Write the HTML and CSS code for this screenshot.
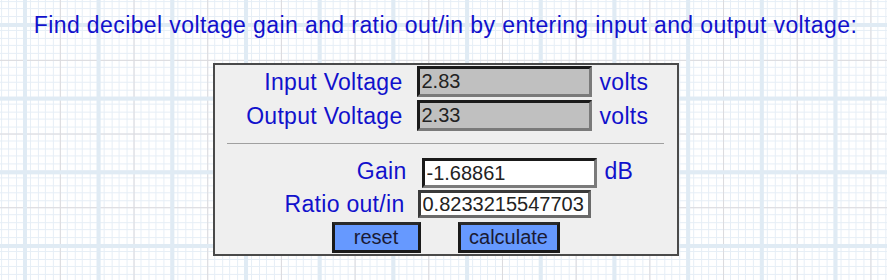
FILE: index.html
```html
<!DOCTYPE html>
<html lang="en">
<head>
  <meta charset="UTF-8">
  <title>Decibel Voltage Gain Calculator</title>
  <meta name="viewport" content="width=device-width, initial-scale=1.0">
  <link rel="stylesheet" href="styles.css">
</head>
<body>
  <h1 class="title">Find decibel voltage gain and ratio out/in by entering input and output voltage:</h1>

  <form class="panel" onsubmit="return false">
    <div class="rows volts">
      <label class="label" for="vin">Input Voltage</label>
      <input class="field given" id="vin" type="text" value="2.83">
      <span class="unit">volts</span>

      <label class="label" for="vout">Output Voltage</label>
      <input class="field given" id="vout" type="text" value="2.33">
      <span class="unit">volts</span>
    </div>

    <hr class="rule">

    <div class="rows results">
      <label class="label gain-label" for="gain">Gain</label>
      <input class="field result gain" id="gain" type="text" value="-1.68861">
      <span class="unit">dB</span>

      <label class="label ratio-label" for="ratio">Ratio out/in</label>
      <input class="field result ratio" id="ratio" type="text" value="0.8233215547703">
      <span></span>
    </div>

    <div class="actions">
      <button class="btn reset" type="reset">reset</button>
      <button class="btn calc" type="button">calculate</button>
    </div>
  </form>
</body>
</html>
```

FILE: styles.css
```css
:root {
  --ink: #1111cc;
  --panel: #efefef;
  --edge: #4a4a4a;
  --dark: #1a1a1a;
  --shade: #7a7a7a;
  --given: #c0c0c0;
  --button: #6699ff;
  --minor: #e6eef6;
  --major: #e0ebf4;
  --mid: #dcdadd;
}

body {
  margin: 0;
  padding: 12px 0 0 4px;
  font-family: "Liberation Sans", Arial, sans-serif;
  background-color: #ffffff;
  background-image:
    linear-gradient(to right, var(--major) 0, var(--major) 4px, transparent 4px),
    linear-gradient(to bottom, var(--major) 0, var(--major) 4px, transparent 4px),
    linear-gradient(to right, transparent 36.4px, var(--mid) 36.4px, var(--mid) 37.6px, transparent 37.6px),
    linear-gradient(to bottom, transparent 36.4px, var(--mid) 36.4px, var(--mid) 37.6px, transparent 37.6px),
    repeating-linear-gradient(to right, var(--minor) 0, var(--minor) 1px, transparent 1px, transparent 7.37px),
    repeating-linear-gradient(to bottom, var(--minor) 0, var(--minor) 1px, transparent 1px, transparent 7.37px);
  background-size: 73.7px 73.7px;
  background-position: 23px 23px;
  height: 280px;
  box-sizing: border-box;
  overflow: hidden;
}

.title {
  margin: 0;
  font-size: 23px;
  font-weight: normal;
  letter-spacing: 0.4px;
  line-height: 26px;
  color: var(--ink);
  text-align: center;
}

.panel {
  width: 466px;
  box-sizing: border-box;
  margin: 25px auto 0;
  padding: 1px 0 1px;
  background: var(--panel);
  border: 2px solid var(--edge);
}

.rows {
  display: grid;
  align-items: center;
}

.volts {
  grid-template-columns: 188px 175px auto;
  column-gap: 14px;
  row-gap: 3px;
}

.results {
  grid-template-columns: 192px 175px auto;
  column-gap: 15px;
  row-gap: 2px;
  margin-top: 14px;
}

.label {
  font-size: 23px;
  letter-spacing: 0.3px;
  line-height: 26px;
  color: var(--ink);
  text-align: right;
  white-space: nowrap;
}

.gain-label {
  margin-bottom: 4px;
}

.ratio-label {
  padding-right: 2px;
}

.unit {
  font-size: 23px;
  letter-spacing: 0.3px;
  line-height: 26px;
  color: var(--ink);
  margin-left: -6px;
}

.results .unit {
  margin-left: -7px;
  margin-bottom: 4px;
}

.field {
  box-sizing: border-box;
  width: 175px;
  height: 31px;
  margin: 0;
  padding: 0 2px;
  font-family: "Liberation Sans", Arial, sans-serif;
  font-size: 20px;
  color: #222222;
  border-style: solid;
  border-width: 3px;
  border-color: var(--dark) var(--shade) var(--shade) var(--dark);
  outline: none;
}

.given {
  background: var(--given);
}

.result {
  background: #ffffff;
}

.gain {
  height: 30px;
}

.ratio {
  width: 173px;
  height: 28px;
  margin-left: -4px;
  border-color: #3a3a3a #6a6a6a #6a6a6a #3a3a3a;
}

.rule {
  margin: 12px 13px 0 12px;
  border: none;
  border-top: 1px solid #a0a0a0;
  height: 0;
}

.actions {
  display: flex;
  justify-content: center;
  gap: 37px;
  margin-top: 4px;
}

.btn {
  box-sizing: border-box;
  height: 31px;
  padding: 0;
  font-family: "Liberation Sans", Arial, sans-serif;
  font-size: 20px;
  color: #1a1a33;
  background: var(--button);
  border: 3px solid var(--dark);
  border-top-color: #2a2a2a;
  cursor: pointer;
}

.reset {
  width: 89px;
}

.calc {
  width: 102px;
}
```
